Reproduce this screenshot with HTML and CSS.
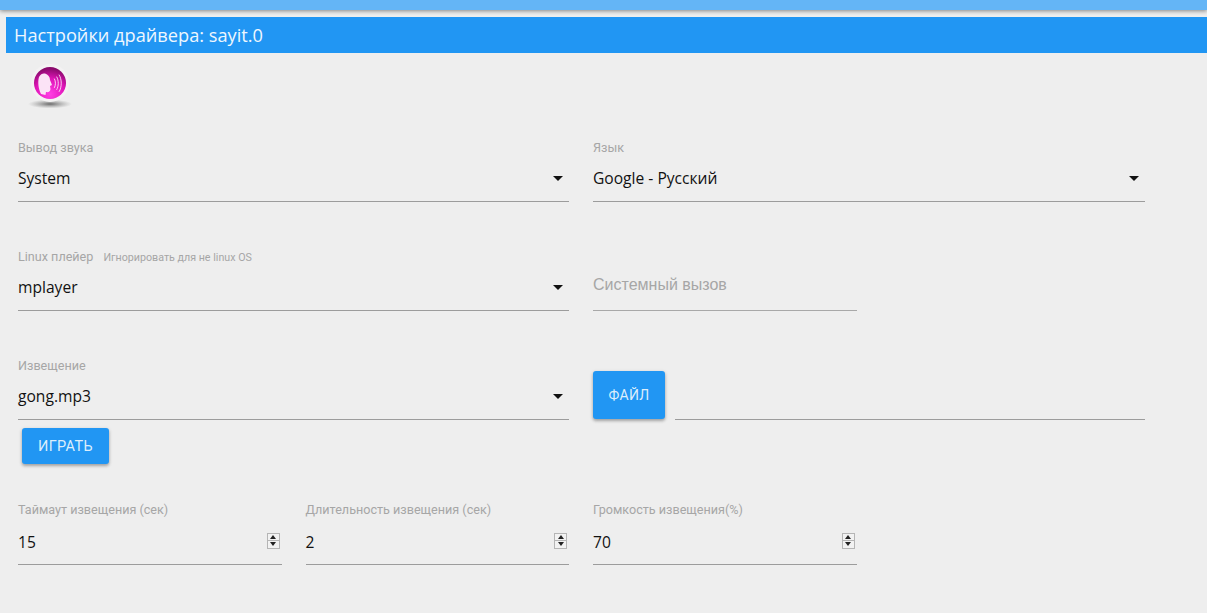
FILE: index.html
```html
<!DOCTYPE html>
<html lang="ru">
<head>
<meta charset="utf-8">
<title>Настройки драйвера: sayit.0</title>
<link rel="stylesheet" href="styles.css">
</head>
<body>
<div class="topbar"></div>
<main class="panel">
  <h1 class="title">Настройки драйвера: sayit.0</h1>
  <svg class="logo" width="48" height="48" viewBox="0 0 48 48" aria-hidden="true">
    <defs>
      <radialGradient id="ball" cx="50%" cy="85%" r="80%">
        <stop offset="0" stop-color="#ff3fe4"/>
        <stop offset="0.6" stop-color="#e014b8"/>
        <stop offset="1" stop-color="#8a0a6c"/>
      </radialGradient>
      <radialGradient id="shade" cx="50%" cy="50%" r="50%">
        <stop offset="0" stop-color="#555" stop-opacity="0.85"/>
        <stop offset="1" stop-color="#888" stop-opacity="0"/>
      </radialGradient>
    </defs>
    <ellipse cx="24" cy="42" rx="22" ry="4.5" fill="url(#shade)"/>
    <circle cx="24" cy="21" r="19" fill="#f4f2f3"/>
    <circle cx="24" cy="21" r="16" fill="url(#ball)"/>
    <path d="M13 15 C14.500 12 17 11 19 11.500 C22 12.500 24 15 24 18 L26 23 L24 24 L24.500 27 C24.500 29.500 22.500 30.500 20 30 L19.500 33 L15 32 C12.500 27 11.500 20 13 15 Z" fill="#fbe3f6"/>
    <g fill="none" stroke="#fbe3f6" stroke-width="0.9" stroke-linecap="round">
      <path d="M28.500 17 C29.800 19.500 29.800 23 28.500 25.500"/>
      <path d="M30.800 15 C32.800 18.500 32.800 24 30.800 27.500"/>
      <path d="M33.200 13 C36 17.500 36 25 33.200 29.500"/>
    </g>
  </svg>
  <div class="form">
    <div class="field half">
      <label class="label">Вывод звука</label>
      <div class="control"><span class="value">System</span><span class="arrow"></span></div>
    </div>
    <div class="field half">
      <label class="label">Язык</label>
      <div class="control"><span class="value">Google - Русский</span><span class="arrow"></span></div>
    </div>

    <div class="field half">
      <label class="label">Linux плейер <small class="hint">Игнорировать для не linux OS</small></label>
      <div class="control"><span class="value">mplayer</span><span class="arrow"></span></div>
    </div>
    <div class="field">
      <div class="control placeholder-control"><span class="placeholder">Системный вызов</span></div>
    </div>
    <div class="spacer"></div>

    <div class="field half with-play">
      <label class="label">Извещение</label>
      <div class="control"><span class="value">gong.mp3</span><span class="arrow"></span></div>
      <button class="btn play" type="button">Играть</button>
    </div>
    <div class="file half">
      <button class="btn upload" type="button">Файл</button>
      <div class="file-line"></div>
    </div>

    <div class="field number">
      <label class="label">Таймаут извещения (сек)</label>
      <div class="control"><span class="value">15</span><span class="spin"><i class="up"></i><i class="down"></i></span></div>
    </div>
    <div class="field number">
      <label class="label">Длительность извещения (сек)</label>
      <div class="control"><span class="value">2</span><span class="spin"><i class="up"></i><i class="down"></i></span></div>
    </div>
    <div class="field number">
      <label class="label">Громкость извещения(%)</label>
      <div class="control"><span class="value">70</span><span class="spin"><i class="up"></i><i class="down"></i></span></div>
    </div>
  </div>
</main>
</body>
</html>
```

FILE: styles.css
```css
* { box-sizing: border-box; }

html, body { height: 100%; }

body {
  margin: 0;
  overflow: hidden;
  background: #eeeeee;
  font-family: "Open Sans", "Noto Sans", sans-serif;
}

.topbar {
  height: 10px;
  background: #64b5f6;
  box-shadow: 0 1px 4px rgba(0, 0, 0, 0.45);
}

.panel {
  padding: 7px 0 0 6px;
}

.title {
  margin: 0;
  height: 36px;
  padding-left: 8px;
  background: #2196f3;
  color: #eef7fe;
  font-size: 18.2px;
  font-weight: 400;
  line-height: 36px;
}

.logo {
  display: block;
  margin: 9px 0 0 20px;
}

.form {
  display: grid;
  grid-template-columns: 263.5px 263.5px 263.5px 264.5px;
  column-gap: 24px;
  margin: 30px 0 0 12px;
  align-items: start;
}

.half { grid-column: span 2; }

.field {
  margin-bottom: 47px;
  font-family: Roboto, sans-serif;
}

.label {
  display: block;
  height: 16px;
  color: #a6a6a6;
  font-size: 12.6px;
  line-height: 16px;
}

.hint {
  margin-left: 7px;
  font-size: 10.7px;
}

.control {
  display: flex;
  align-items: center;
  justify-content: space-between;
  height: 46px;
  padding: 9px 6px 10px 0;
  border-bottom: 1px solid #9c9c9c;
}

.value {
  color: #111;
  font-family: "Open Sans", sans-serif;
  font-size: 15.6px;
}

.arrow {
  width: 0;
  height: 0;
  border-style: solid;
  border-width: 5px 5.5px 0;
  border-color: #111 transparent transparent;
}

.placeholder-control {
  height: 62px;
  padding: 23px 0 0;
  align-items: flex-start;
  border-bottom-color: #a8a8a8;
}

.placeholder {
  color: #a6a6a6;
  font-family: "Liberation Sans", Arial, sans-serif;
  font-size: 16px;
  line-height: 26px;
}

.spacer { grid-column: span 1; }

.btn {
  border: 0;
  border-radius: 3px;
  background: #2196f3;
  color: #dceefc;
  font-family: Roboto, sans-serif;
  font-size: 14.5px;
  text-transform: uppercase;
  letter-spacing: 0.3px;
  box-shadow: 0 2px 3px rgba(0, 0, 0, 0.25), 0 1px 4px rgba(0, 0, 0, 0.12);
}

.play {
  display: block;
  width: 87px;
  height: 36px;
  margin: 8px 0 0 4px;
}

.with-play { margin-bottom: 38px; }

.file {
  display: flex;
  align-items: flex-end;
  gap: 10px;
  padding-top: 13px;
}

.upload {
  flex: none;
  width: 72px;
  height: 48px;
  margin-bottom: 1px;
  font-size: 14px;
}

.file-line {
  flex: 1;
  border-bottom: 1px solid #9c9c9c;
}

.number .control {
  height: 47px;
  padding: 11px 2px 10px 0;
}

.spin {
  display: flex;
  flex-direction: column;
  width: 13px;
  height: 16px;
  margin-top: -2px;
  border: 1px solid #b5b5b5;
  background: #f2f2f2;
}

.spin i {
  flex: 1;
  display: flex;
  align-items: center;
  justify-content: center;
}

.spin i::before {
  content: "";
  border-style: solid;
  border-color: transparent;
}

.spin .up { border-bottom: 1px solid #b5b5b5; }

.spin .up::before {
  border-width: 0 3px 4px;
  border-bottom-color: #222;
}

.spin .down::before {
  border-width: 4px 3px 0;
  border-top-color: #222;
}
```
